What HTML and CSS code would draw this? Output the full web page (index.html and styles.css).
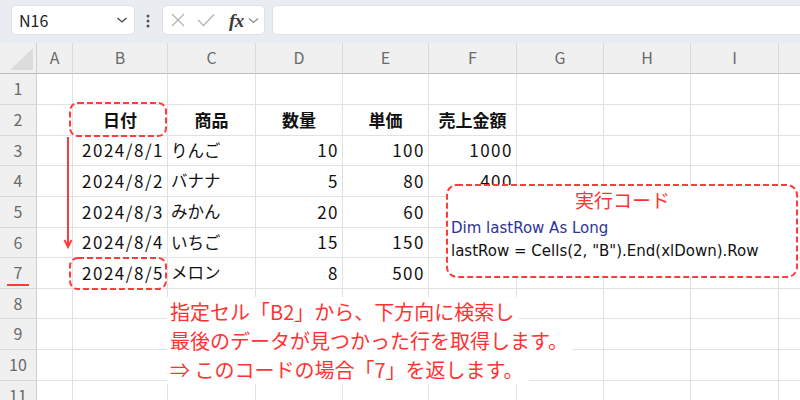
FILE: index.html
```html
<!DOCTYPE html>
<html lang="ja">
<head>
<meta charset="utf-8">
<title>Sheet</title>
<link rel="stylesheet" href="styles.css">
</head>
<body>
<div class="app">
  <div class="toolbar">
    <div class="namebox">
      <span class="name">N16</span>
      <svg class="chev" width="12" height="8" viewBox="0 0 12 8"><polyline points="1.5,2 6,6 10.5,2" fill="none" stroke="#444" stroke-width="1.3"/></svg>
    </div>
    <svg class="dots" width="6" height="16" viewBox="0 0 6 16"><circle cx="3" cy="3" r="1.5" fill="#555"/><circle cx="3" cy="8" r="1.5" fill="#555"/><circle cx="3" cy="13" r="1.5" fill="#555"/></svg>
    <div class="fxbox">
      <svg width="14" height="14" viewBox="0 0 14 14"><path d="M1 1 L13 13 M13 1 L1 13" stroke="#b4b4b4" stroke-width="1.3" fill="none"/></svg>
      <svg width="18" height="14" viewBox="0 0 18 14"><polyline points="1,7 6.5,12.5 17,1.5" stroke="#b4b4b4" stroke-width="1.3" fill="none"/></svg>
      <span class="fx">fx</span>
      <svg width="11" height="7" viewBox="0 0 11 7"><polyline points="1,1.5 5.5,5.5 10,1.5" fill="none" stroke="#888" stroke-width="1.2"/></svg>
    </div>
    <div class="formula"></div>
  </div>

  <div class="sheet">
    <div class="grid">
      <span class="corner"><svg width="23" height="22" viewBox="0 0 23 22"><polygon points="23,0 23,22 0,22" fill="#dcdcdc"/></svg></span>
      <span class="ch">A</span><span class="ch">B</span><span class="ch">C</span><span class="ch">D</span><span class="ch">E</span><span class="ch">F</span><span class="ch">G</span><span class="ch">H</span><span class="ch">I</span><span class="ch"></span>

      <span class="rh">1</span><span></span><span></span><span></span><span></span><span></span><span></span><span></span><span></span><span></span><span></span>

      <span class="rh">2</span><span></span><span class="hd">日付</span><span class="hd">商品</span><span class="hd">数量</span><span class="hd">単価</span><span class="hd">売上金額</span><span></span><span></span><span></span><span></span>

      <span class="rh">3</span><span></span><span class="r">2024/8/1</span><span class="l">りんご</span><span class="r">10</span><span class="r">100</span><span class="r">1000</span><span></span><span></span><span></span><span></span>

      <span class="rh">4</span><span></span><span class="r">2024/8/2</span><span class="l">バナナ</span><span class="r">5</span><span class="r">80</span><span class="r">400</span><span></span><span></span><span></span><span></span>

      <span class="rh">5</span><span></span><span class="r">2024/8/3</span><span class="l">みかん</span><span class="r">20</span><span class="r">60</span><span></span><span></span><span></span><span></span><span></span>

      <span class="rh">6</span><span></span><span class="r">2024/8/4</span><span class="l">いちご</span><span class="r">15</span><span class="r">150</span><span></span><span></span><span></span><span></span><span></span>

      <span class="rh">7</span><span></span><span class="r">2024/8/5</span><span class="l">メロン</span><span class="r">8</span><span class="r">500</span><span></span><span></span><span></span><span></span><span></span>

      <span class="rh">8</span><span></span><span></span><span></span><span></span><span></span><span></span><span></span><span></span><span></span><span></span>

      <span class="rh">9</span><span></span><span></span><span></span><span></span><span></span><span></span><span></span><span></span><span></span><span></span>

      <span class="rh">10</span><span></span><span></span><span></span><span></span><span></span><span></span><span></span><span></span><span></span><span></span>

      <span class="rh">11</span><span></span><span></span><span></span><span></span><span></span><span></span><span></span><span></span><span></span><span></span>
    </div>

    <svg class="mark mark-b2" width="98" height="35" viewBox="0 0 98 35"><rect x="1" y="1" width="96" height="33" rx="8" fill="none" stroke="#ff3b3b" stroke-width="2" stroke-dasharray="6 3"/></svg>
    <svg class="mark mark-b7" width="98" height="33" viewBox="0 0 98 33"><rect x="1" y="1" width="96" height="31" rx="8" fill="none" stroke="#ff3b3b" stroke-width="2" stroke-dasharray="6 3"/></svg>
    <svg class="arrow" width="10" height="112" viewBox="0 0 10 112"><path d="M5 0 V110 M1.5 103 L5 110 L8.5 103" fill="none" stroke="#ff3b3b" stroke-width="2"/></svg>
    <span class="row-mark"></span>

    <div class="codebox">
      <svg class="codeborder" width="352" height="94" viewBox="0 0 352 94"><rect x="1" y="1" width="350" height="92" rx="10" fill="#fff" stroke="#ff3b3b" stroke-width="2" stroke-dasharray="6 3"/></svg>
      <div class="code-title">実行コード</div>
      <div class="code-line kw">Dim lastRow As Long</div>
      <div class="code-line">lastRow = Cells(2, "B").End(xlDown).Row</div>
    </div>

    <div class="note">
      <span class="note-line">指定セル「B2」から、下方向に検索し</span>
      <span class="note-line">最後のデータが見つかった行を取得します。</span>
      <span class="note-line">⇒ このコードの場合「7」を返します。</span>
    </div>
  </div>
</div>
</body>
</html>
```

FILE: styles.css
```css
* { box-sizing: border-box; }
html, body { margin: 0; padding: 0; }
body {
  width: 800px;
  height: 400px;
  overflow: hidden;
  background: #fff;
  font-family: "Noto Sans CJK JP", sans-serif;
}
.app { width: 800px; height: 400px; overflow: hidden; }

.toolbar {
  height: 43px;
  background: #e9edf1;
  display: flex;
  align-items: flex-start;
  padding: 5px 0 0 11px;
}
.namebox {
  width: 124px;
  height: 30px;
  background: #fff;
  border: 1px solid #dde1e5;
  border-radius: 5px;
  display: flex;
  align-items: center;
  justify-content: space-between;
  padding: 0 6px 0 7px;
}
.name {
  font-family: "Noto Sans CJK JP", sans-serif;
  font-size: 16px;
  color: #222;
  line-height: 1;
}
.dots { margin: 8px 0 0 10px; }
.fxbox {
  margin-left: 11px;
  width: 103px;
  height: 30px;
  background: #fff;
  border: 1px solid #dde1e5;
  border-radius: 5px;
  display: flex;
  align-items: center;
  padding: 0 3px 0 8px;
}
.fxbox svg:nth-child(1) { margin-right: 12px; }
.fxbox svg:nth-child(2) { margin-right: 14px; }
.fx {
  font-family: "Liberation Serif", serif;
  font-style: italic;
  font-weight: bold;
  font-size: 19px;
  color: #3a3a3a;
  line-height: 1;
  margin-right: 4px;
  letter-spacing: -0.5px;
}
.formula {
  margin-left: 7px;
  flex: 1;
  height: 30px;
  background: #fff;
  border: 1px solid #dde1e5;
  border-right: none;
  border-radius: 5px 0 0 5px;
}

.sheet { position: relative; }
.grid {
  display: grid;
  grid-template-columns: 37px 36px 95px 88px 87px 86px 88px 87px 87px 88px 100px;
  grid-template-rows: 31px 31px 31px 30px 31px 31px 30px 31px 30px 31px 31px 30px;
}
.grid > span {
  border-right: 1px solid #e1e1e1;
  border-bottom: 1px solid #e1e1e1;
  display: flex;
  align-items: center;
  padding-bottom: 2px;
  font-size: 16.5px;
  color: #111;
  white-space: nowrap;
  overflow: hidden;
}
.grid > .corner {
  background: #f0f0f0;
  border-right: 1px solid #cfcfcf;
  border-bottom: 1px solid #bdbdbd;
  align-items: flex-end;
  justify-content: flex-end;
  padding: 0 3px 3px 0;
}
.grid > .ch {
  background: #f0f0f0;
  border-right: 1px solid #dadada;
  border-bottom: 1px solid #bdbdbd;
  justify-content: center;
  color: #6a6a6a;
  font-size: 16px;
}
.grid > .rh {
  background: #f0f0f0;
  border-right: 1px solid #cfcfcf;
  border-bottom: 1px solid #dadada;
  justify-content: center;
  color: #6a6a6a;
  font-size: 16px;
}
.grid > .r {
  justify-content: flex-end;
  padding-right: 3px;
  font-size: 17px;
  letter-spacing: 1.5px;
}
.grid > .l { justify-content: flex-start; padding-left: 3px; }
.grid > .hd { justify-content: center; font-weight: bold; font-size: 17px; }

.mark, .arrow, .row-mark, .codebox, .note { position: absolute; }
.mark-b2 { left: 69px; top: 59px; }
.mark-b7 { left: 69px; top: 214px; }
.arrow { left: 63px; top: 94px; }
.row-mark {
  left: 7px;
  top: 241px;
  width: 22px;
  height: 2px;
  background: #ff3b3b;
}

.codebox {
  left: 446px;
  top: 141px;
  width: 352px;
  height: 94px;
  padding: 3px 4px 0 5px;
}
.codeborder { position: absolute; left: 0; top: 0; }
.code-title {
  position: relative;
  text-align: center;
  color: #ff3333;
  font-size: 19px;
  line-height: 26px;
  margin-bottom: 4px;
}
.code-line {
  position: relative;
  font-family: "DejaVu Sans", sans-serif;
  font-size: 15px;
  line-height: 23px;
  color: #111;
  white-space: nowrap;
}
.code-line.kw { color: #2e3399; }

.note {
  left: 167px;
  top: 254px;
  display: flex;
  flex-direction: column;
  align-items: flex-start;
}
.note-line {
  background: #fff;
  color: #ff3333;
  font-size: 20px;
  line-height: 29px;
  padding: 0 5px 0 3px;
  white-space: nowrap;
}
```
